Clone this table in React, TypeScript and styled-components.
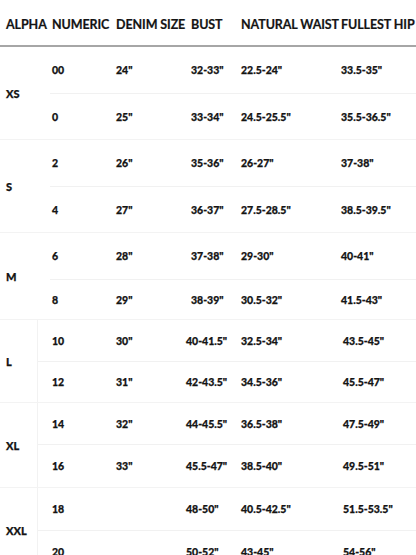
import React from 'react';
import { styled, createGlobalStyle } from 'styled-components';

const GlobalStyle = createGlobalStyle`
  *, *::before, *::after {
    box-sizing: border-box;
  }
  html, body {
    margin: 0;
    padding: 0;
    background: #ffffff;
  }
  body {
    width: 416px;
    height: 555px;
    overflow: hidden;
    font-family: Lato, "Open Sans", sans-serif;
    color: #141414;
  }
`;

const COLS = '46px 64px 75px 50px 100px 81px';

const Chart = styled.div`
  display: flex;
  flex-direction: column;
  width: 416px;
`;

const HeaderRow = styled.div`
  display: grid;
  grid-template-columns: ${COLS};
  height: 47px;
  align-items: center;
  border-bottom: 2px solid #a6a6a6;
`;

const HeadCell = styled.div`
  padding-left: 6px;
  padding-top: 3px;
  font-size: 12.5px;
  font-weight: 700;
  letter-spacing: -0.1px;
  white-space: nowrap;
  -webkit-text-stroke: 0.2px #141414;
`;

const Group = styled.div<{ $compact?: boolean }>`
  display: grid;
  grid-template-columns: ${({ $compact }) => ($compact ? '38px 1fr' : '50px 1fr')};
  border-bottom: 1px solid #f3f3f3;
`;

const AlphaCell = styled.div<{ $compact?: boolean }>`
  display: flex;
  align-items: center;
  padding-left: 6px;
  font-size: 11px;
  font-weight: 900;
  -webkit-text-stroke: 0.25px #141414;
  border-right: ${({ $compact }) => ($compact ? '1px solid #f2f2f2' : 'none')};
`;

const Rows = styled.div`
  display: flex;
  flex-direction: column;
`;

const Row = styled.div<{ $compact?: boolean }>`
  display: grid;
  grid-template-columns: ${({ $compact }) =>
    $compact ? '72px 75px 50px 100px 81px' : '60px 75px 50px 100px 81px'};
  align-items: center;
  & + & {
    border-top: 1px solid #f1f1f1;
  }
`;

const Cell = styled.div<{ $shift?: number }>`
  padding-left: ${({ $shift }) => 6 + ($shift ?? 0)}px;
  font-size: 10.5px;
  font-weight: 900;
  white-space: nowrap;
  -webkit-text-stroke: 0.25px #141414;
`;

type SizeRow = { num: string; denim: string; bust: string; waist: string; hip: string; h: number };
type SizeGroup = { alpha: string; compact?: boolean; rows: SizeRow[] };

const groups: SizeGroup[] = [
  {
    alpha: 'XS',
    rows: [
      { num: '00', denim: '24"', bust: '32-33"', waist: '22.5-24"', hip: '33.5-35"', h: 46 },
      { num: '0', denim: '25"', bust: '33-34"', waist: '24.5-25.5"', hip: '35.5-36.5"', h: 46 },
    ],
  },
  {
    alpha: 'S',
    rows: [
      { num: '2', denim: '26"', bust: '35-36"', waist: '26-27"', hip: '37-38"', h: 46 },
      { num: '4', denim: '27"', bust: '36-37"', waist: '27.5-28.5"', hip: '38.5-39.5"', h: 46 },
    ],
  },
  {
    alpha: 'M',
    rows: [
      { num: '6', denim: '28"', bust: '37-38"', waist: '29-30"', hip: '40-41"', h: 46 },
      { num: '8', denim: '29"', bust: '38-39"', waist: '30.5-32"', hip: '41.5-43"', h: 40 },
    ],
  },
  {
    alpha: 'L',
    compact: true,
    rows: [
      { num: '10', denim: '30"', bust: '40-41.5"', waist: '32.5-34"', hip: '43.5-45"', h: 41 },
      { num: '12', denim: '31"', bust: '42-43.5"', waist: '34.5-36"', hip: '45.5-47"', h: 41 },
    ],
  },
  {
    alpha: 'XL',
    compact: true,
    rows: [
      { num: '14', denim: '32"', bust: '44-45.5"', waist: '36.5-38"', hip: '47.5-49"', h: 41 },
      { num: '16', denim: '33"', bust: '45.5-47"', waist: '38.5-40"', hip: '49.5-51"', h: 43 },
    ],
  },
  {
    alpha: 'XXL',
    compact: true,
    rows: [
      { num: '18', denim: '', bust: '48-50"', waist: '40.5-42.5"', hip: '51.5-53.5"', h: 42 },
      { num: '20', denim: '', bust: '50-52"', waist: '43-45"', hip: '54-56"', h: 42 },
    ],
  },
];

export default function App() {
  return (
    <>
      <GlobalStyle />
      <Chart>
        <HeaderRow>
          <HeadCell>ALPHA</HeadCell>
          <HeadCell>NUMERIC</HeadCell>
          <HeadCell>DENIM SIZE</HeadCell>
          <HeadCell>BUST</HeadCell>
          <HeadCell>NATURAL WAIST</HeadCell>
          <HeadCell>FULLEST HIP</HeadCell>
        </HeaderRow>
        {groups.map((g) => (
          <Group key={g.alpha} $compact={g.compact}>
            <AlphaCell $compact={g.compact}>{g.alpha}</AlphaCell>
            <Rows>
              {g.rows.map((r) => (
                <Row key={r.num} $compact={g.compact} style={{ height: r.h }}>
                  <Cell $shift={g.compact ? 8 : -4}>{r.num}</Cell>
                  <Cell>{r.denim}</Cell>
                  <Cell $shift={g.compact ? -5 : 0}>{r.bust}</Cell>
                  <Cell>{r.waist}</Cell>
                  <Cell $shift={g.compact ? 2 : 0}>{r.hip}</Cell>
                </Row>
              ))}
            </Rows>
          </Group>
        ))}
      </Chart>
    </>
  );
}
